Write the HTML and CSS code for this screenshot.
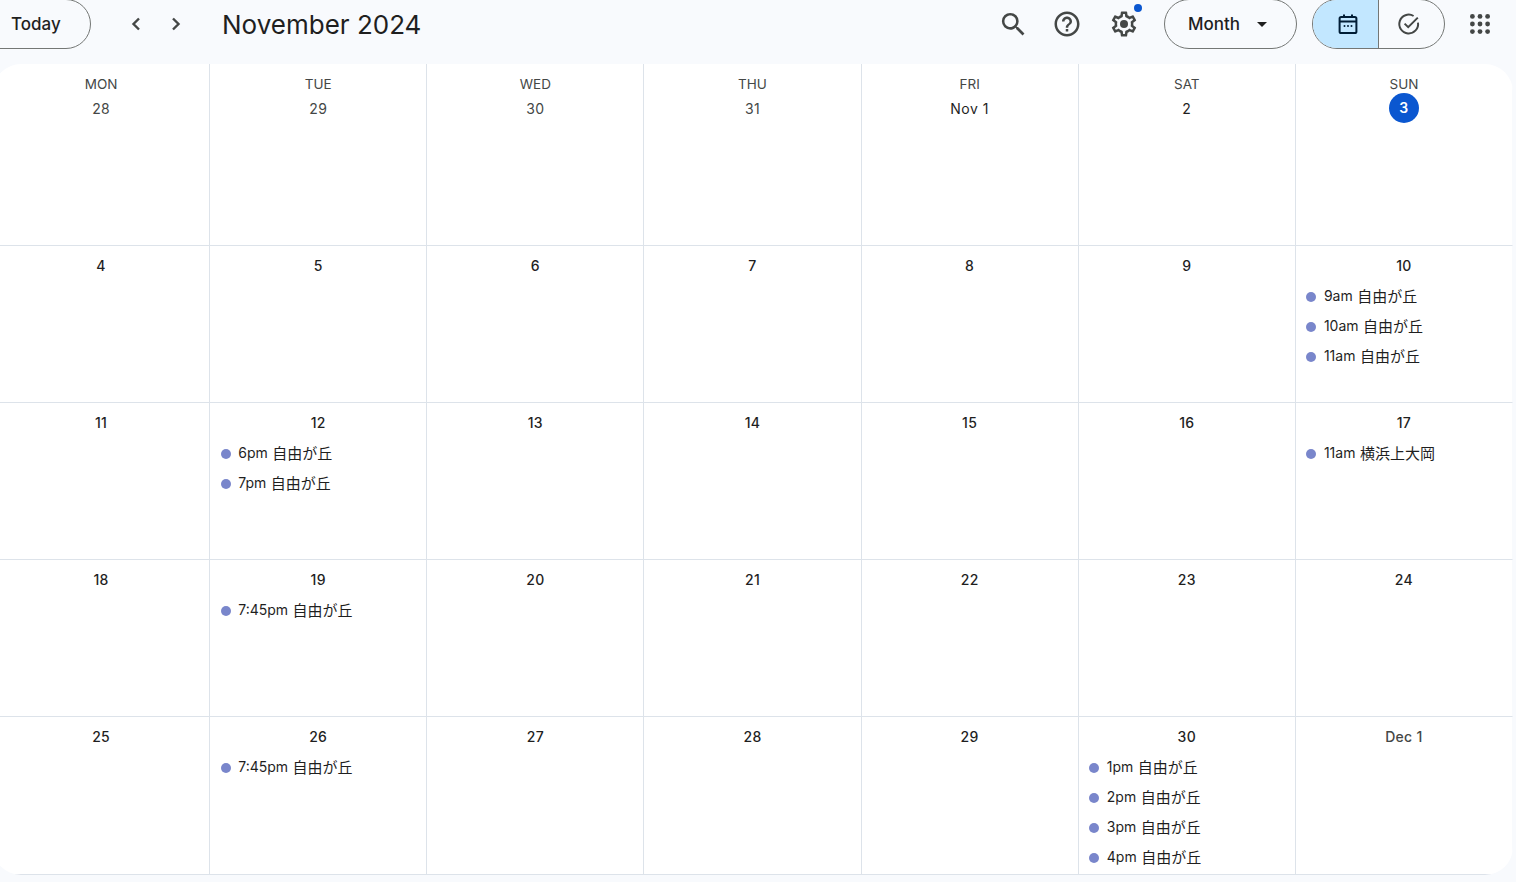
FILE: index.html
```html
<!DOCTYPE html>
<html lang="en">

<head>
    <meta charset="UTF-8">
    <meta name="viewport" content="width=device-width, initial-scale=1.0">
    <title>Calendar - November 2024</title>
    <link rel="stylesheet" href="styles.css">
</head>

<body>
    <div class="page">
        <header class="topbar">
            <button class="pill today-btn">Today</button>
            <button class="nav-btn nav-prev" aria-label="Previous month">
                <svg viewBox="0 0 24 24" width="24" height="24"><path d="M15 6.5 9.5 12l5.5 5.5" class="chev"/></svg>
            </button>
            <button class="nav-btn nav-next" aria-label="Next month">
                <svg viewBox="0 0 24 24" width="24" height="24"><path d="M9 6.5 14.5 12 9 17.5" class="chev"/></svg>
            </button>
            <h1 class="month-title">November 2024</h1>

            <div class="tools">
                <button class="icon-btn" aria-label="Search">
                    <svg viewBox="0 0 24 24" width="31" height="31"><path d="M15.5 14h-.79l-.28-.27A6.471 6.471 0 0 0 16 9.5 6.5 6.5 0 1 0 9.5 16c1.61 0 3.09-.59 4.23-1.57l.27.28v.79l5 4.99L20.49 19l-4.99-5zm-6 0C7.01 14 5 11.99 5 9.5S7.01 5 9.5 5 14 7.01 14 9.5 11.99 14 9.5 14z"/></svg>
                </button>
                <button class="icon-btn help-btn" aria-label="Help">
                    <svg viewBox="0 0 24 24" width="30" height="30"><path d="M11 18h2v-2h-2v2zm1-16C6.48 2 2 6.48 2 12s4.48 10 10 10 10-4.48 10-10S17.52 2 12 2zm0 18c-4.41 0-8-3.59-8-8s3.59-8 8-8 8 3.59 8 8-3.59 8-8 8zm0-14c-2.21 0-4 1.79-4 4h2c0-1.1.9-2 2-2s2 .9 2 2c0 2-3 1.75-3 5h2c0-2.25 3-2.5 3-5 0-2.21-1.79-4-4-4z"/></svg>
                </button>
                <button class="icon-btn settings-btn" aria-label="Settings">
                    <svg viewBox="0 0 24 24" width="30" height="30"><path d="M19.43 12.98c.04-.32.07-.64.07-.98 0-.34-.03-.66-.07-.98l2.11-1.65c.19-.15.24-.42.12-.64l-2-3.46c-.09-.16-.26-.25-.44-.25-.06 0-.12.01-.17.03l-2.49 1c-.52-.4-1.08-.73-1.69-.98l-.38-2.65C14.46 2.18 14.25 2 14 2h-4c-.25 0-.46.18-.49.42l-.38 2.65c-.61.25-1.17.59-1.69.98l-2.49-1c-.06-.02-.12-.03-.18-.03-.17 0-.34.09-.43.25l-2 3.46c-.13.22-.07.49.12.64l2.11 1.65c-.04.32-.07.65-.07.98 0 .33.03.66.07.98l-2.11 1.65c-.19.15-.24.42-.12.64l2 3.46c.09.16.26.25.44.25.06 0 .12-.01.17-.03l2.49-1c.52.4 1.08.73 1.69.98l.38 2.65c.03.24.24.42.49.42h4c.25 0 .46-.18.49-.42l.38-2.65c.61-.25 1.17-.59 1.69-.98l2.49 1c.06.02.12.03.18.03.17 0 .34-.09.43-.25l2-3.46c.12-.22.07-.49-.12-.64l-2.11-1.65zm-1.98-1.71c.04.31.05.52.05.73 0 .21-.02.43-.05.73l-.14 1.13.89.7 1.08.84-.7 1.21-1.27-.51-1.04-.42-.9.68c-.43.32-.84.56-1.25.73l-1.06.43-.16 1.13-.2 1.35h-1.4l-.19-1.35-.16-1.13-1.06-.43c-.43-.18-.83-.41-1.23-.71l-.91-.7-1.06.43-1.27.51-.7-1.21 1.08-.84.89-.7-.14-1.13c-.03-.31-.05-.54-.05-.74s.02-.43.05-.73l.14-1.13-.89-.7-1.08-.84.7-1.21 1.27.51 1.04.42.9-.68c.43-.32.84-.56 1.25-.73l1.06-.43.16-1.13.2-1.35h1.39l.19 1.35.16 1.13 1.06.43c.43.18.83.41 1.23.71l.91.7 1.06-.43 1.27-.51.7 1.21-1.07.85-.89.7.14 1.13z"/><circle cx="12" cy="12" r="3.2"/></svg>
                    <span class="notify-dot"></span>
                </button>
                <button class="pill month-btn">Month
                    <svg viewBox="0 0 10 5" width="10" height="5"><path d="M0 0h10L5 5z"/></svg>
                </button>
                <div class="toggle">
                    <button class="toggle-part toggle-active" aria-label="Calendar">
                        <svg viewBox="0 0 24 24" width="24" height="24" class="cal-icon">
                            <rect x="3.6" y="5" width="16.8" height="16" rx="1.6" class="line"/>
                            <path d="M4 9.6h16M8 2.4v3.4M16 2.4v3.4" class="line"/>
                            <circle cx="8.5" cy="14" r="1"/><circle cx="12" cy="14" r="1"/><circle cx="15.5" cy="14" r="1"/>
                        </svg>
                    </button>
                    <button class="toggle-part toggle-tasks" aria-label="Tasks">
                        <svg viewBox="0 0 24 24" width="24" height="24" class="task-icon">
                            <path d="M21 10.6A9.4 9.4 0 1 1 16.6 4" class="line"/>
                            <path d="m7.6 11.6 3.6 3.6 9.6-9.6" class="line"/>
                        </svg>
                    </button>
                </div>
                <button class="icon-btn apps-btn" aria-label="Apps">
                    <svg viewBox="0 0 20 20" width="20" height="20">
                        <circle cx="2.4" cy="2.4" r="2.4"/><circle cx="10" cy="2.4" r="2.4"/><circle cx="17.6" cy="2.4" r="2.4"/>
                        <circle cx="2.4" cy="10" r="2.4"/><circle cx="10" cy="10" r="2.4"/><circle cx="17.6" cy="10" r="2.4"/>
                        <circle cx="2.4" cy="17.6" r="2.4"/><circle cx="10" cy="17.6" r="2.4"/><circle cx="17.6" cy="17.6" r="2.4"/>
                    </svg>
                </button>
            </div>
        </header>

        <main class="month-grid">
            <!-- first row has the weekday names -->
            <div class="cell"><div class="weekday">MON</div><div class="date date-head muted">28</div></div>
            <div class="cell"><div class="weekday">TUE</div><div class="date date-head muted">29</div></div>
            <div class="cell"><div class="weekday">WED</div><div class="date date-head muted">30</div></div>
            <div class="cell"><div class="weekday">THU</div><div class="date date-head muted">31</div></div>
            <div class="cell"><div class="weekday">FRI</div><div class="date date-head date-plain">Nov 1</div></div>
            <div class="cell"><div class="weekday">SAT</div><div class="date date-head date-plain">2</div></div>
            <div class="cell"><div class="weekday">SUN</div><div class="date date-head"><span class="today-mark">3</span></div></div>

            <div class="cell"><div class="date">4</div></div>
            <div class="cell"><div class="date">5</div></div>
            <div class="cell"><div class="date">6</div></div>
            <div class="cell"><div class="date">7</div></div>
            <div class="cell"><div class="date">8</div></div>
            <div class="cell"><div class="date">9</div></div>
            <div class="cell">
                <div class="date">10</div>
                <div class="event"><span class="dot"></span>9am <span class="place">自由が丘</span></div>
                <div class="event"><span class="dot"></span>10am <span class="place">自由が丘</span></div>
                <div class="event"><span class="dot"></span>11am <span class="place">自由が丘</span></div>
            </div>

            <div class="cell"><div class="date">11</div></div>
            <div class="cell">
                <div class="date">12</div>
                <div class="event"><span class="dot"></span>6pm <span class="place">自由が丘</span></div>
                <div class="event"><span class="dot"></span>7pm <span class="place">自由が丘</span></div>
            </div>
            <div class="cell"><div class="date">13</div></div>
            <div class="cell"><div class="date">14</div></div>
            <div class="cell"><div class="date">15</div></div>
            <div class="cell"><div class="date">16</div></div>
            <div class="cell">
                <div class="date">17</div>
                <div class="event"><span class="dot"></span>11am <span class="place">横浜上大岡</span></div>
            </div>

            <div class="cell"><div class="date">18</div></div>
            <div class="cell">
                <div class="date">19</div>
                <div class="event"><span class="dot"></span>7:45pm <span class="place">自由が丘</span></div>
            </div>
            <div class="cell"><div class="date">20</div></div>
            <div class="cell"><div class="date">21</div></div>
            <div class="cell"><div class="date">22</div></div>
            <div class="cell"><div class="date">23</div></div>
            <div class="cell"><div class="date">24</div></div>

            <div class="cell"><div class="date">25</div></div>
            <div class="cell">
                <div class="date">26</div>
                <div class="event"><span class="dot"></span>7:45pm <span class="place">自由が丘</span></div>
            </div>
            <div class="cell"><div class="date">27</div></div>
            <div class="cell"><div class="date">28</div></div>
            <div class="cell"><div class="date">29</div></div>
            <div class="cell">
                <div class="date">30</div>
                <div class="event"><span class="dot"></span>1pm <span class="place">自由が丘</span></div>
                <div class="event"><span class="dot"></span>2pm <span class="place">自由が丘</span></div>
                <div class="event"><span class="dot"></span>3pm <span class="place">自由が丘</span></div>
                <div class="event"><span class="dot"></span>4pm <span class="place">自由が丘</span></div>
            </div>
            <div class="cell"><div class="date muted">Dec 1</div></div>
        </main>
    </div>
</body>

</html>
```

FILE: styles.css
```css
html, body {
    margin: 0;
    height: 100%;
    overflow: hidden;
}

body {
    font-family: Inter, "Noto Sans CJK JP", sans-serif;
    background-color: #f8fafd;
    color: #1f1f1f;
}

.page {
    width: 1516px;
    height: 882px;
    overflow: hidden;
}

button {
    font-family: inherit;
    color: inherit;
    background: none;
    border: none;
    padding: 0;
    cursor: pointer;
}

/* top bar, the page is scrolled a little so the pills are cut at the top */
.topbar {
    display: flex;
    align-items: center;
    height: 50px;
    margin: -1px 0 15px;
}

.pill {
    height: 50px;
    border: 1px solid #747775;
    border-radius: 25px;
    box-sizing: border-box;
    font-size: 17px;
    font-weight: 500;
    display: flex;
    align-items: center;
}

.today-btn {
    width: 131px;
    margin-left: -40px;
    padding-left: 50px;
}

.nav-btn {
    display: flex;
    width: 24px;
    height: 24px;
}

.nav-prev {
    margin-left: 33px;
}

.nav-next {
    margin-left: 16px;
}

.chev {
    fill: none;
    stroke: #444746;
    stroke-width: 2.4;
}

.month-title {
    margin: 0 0 0 34px;
    font-size: 26px;
    font-weight: 400;
    white-space: nowrap;
}

.tools {
    display: flex;
    align-items: center;
    margin-left: auto;
    padding-right: 26px;
}

.icon-btn {
    display: flex;
    position: relative;
    fill: #444746;
    margin-right: 23px;
}

.help-btn {
    margin-right: 27px;
}

.settings-btn {
    margin-right: 25px;
}

.apps-btn {
    margin: 0 0 0 25px;
}

.notify-dot {
    position: absolute;
    top: -5px;
    right: -3px;
    width: 8px;
    height: 8px;
    border-radius: 50%;
    background-color: #0b57d0;
}

.month-btn {
    width: 133px;
    padding-left: 23px;
    gap: 17px;
}

.month-btn svg {
    fill: #1f1f1f;
}

.toggle {
    display: flex;
    width: 133px;
    height: 50px;
    margin-left: 15px;
    border: 1px solid #747775;
    border-radius: 25px;
    box-sizing: border-box;
    overflow: hidden;
}

.toggle-part {
    display: flex;
    align-items: center;
    justify-content: center;
}

.toggle-active {
    width: 66px;
    background-color: #c2e7ff;
    border-right: 1px solid #747775;
    padding-left: 4px;
}

.toggle-tasks {
    width: 65px;
    padding-right: 6px;
}

.line {
    fill: none;
    stroke-width: 2;
}

.cal-icon {
    fill: #001d35;
}

.cal-icon .line {
    stroke: #001d35;
}

.task-icon .line {
    stroke: #444746;
}

/* month grid */
.month-grid {
    display: grid;
    grid-template-columns: repeat(7, 1fr);
    grid-template-rows: 182px 157px 157px 157px 158px;
    width: 1520px;
    margin-left: -7px;
    background-color: #ffffff;
    border-radius: 28px;
    overflow: hidden;
}

.cell {
    border-right: 1px solid #dde3ea;
    border-bottom: 1px solid #dde3ea;
    box-sizing: border-box;
    padding-top: 12px;
    min-width: 0;
}

.cell:nth-child(7n) {
    border-right-color: #f8fafd;
}

.weekday {
    height: 16px;
    line-height: 16px;
    font-size: 13.5px;
    font-weight: 400;
    color: #444746;
    text-align: center;
}

.date {
    height: 16px;
    line-height: 16px;
    font-size: 14px;
    font-weight: 500;
    letter-spacing: 0.3px;
    text-align: center;
    margin-bottom: 7.5px;
}

.date-head {
    height: 30px;
    line-height: 30px;
    margin: 1px 0 0;
    font-weight: 400;
}

.date-head.muted,
.date-plain {
    padding-top: 1px;
}

.date-plain {
    letter-spacing: 0.5px;
}

.muted {
    color: #444746;
}

.today-mark {
    display: inline-block;
    width: 30px;
    height: 30px;
    border-radius: 50%;
    background-color: #0b57d0;
    color: #ffffff;
    font-weight: 600;
}

.event {
    display: flex;
    align-items: center;
    gap: 4.5px;
    height: 30px;
    padding: 0 0 2px 10.4px;
    box-sizing: border-box;
    font-size: 14px;
    white-space: nowrap;
}

.place {
    font-size: 15px;
}

.dot {
    width: 10px;
    height: 10px;
    margin: 2px 3.2px 0 0;
    border-radius: 50%;
    background-color: #7986cb;
    flex-shrink: 0;
}
```
